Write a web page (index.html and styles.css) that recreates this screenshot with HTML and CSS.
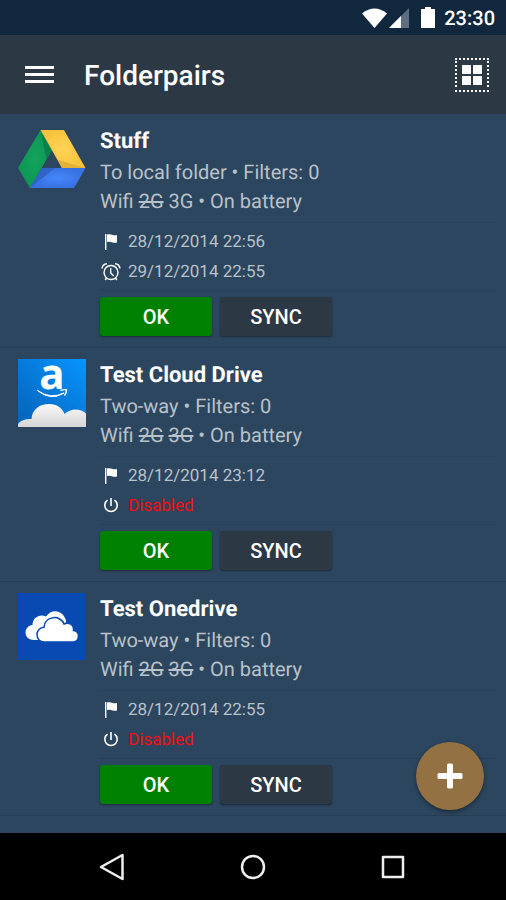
FILE: index.html
```html
<!DOCTYPE html>
<html lang="en">
<head>
<meta charset="utf-8">
<meta name="viewport" content="width=device-width, initial-scale=1">
<title>Folderpairs</title>
<link rel="stylesheet" href="styles.css">
</head>
<body>
<svg class="defs" width="0" height="0" aria-hidden="true">
  <symbol id="flag" viewBox="0 0 22 22"><path d="M5 3h1.400v16H5z" fill="#fff"/><path d="M7 3.500c2-.6 3.500-.4 5 .3 1.500.6 3 .7 5 .3v7.400c-2 .5-3.500.3-5-.3-1.500-.6-3-.7-5-.2z" fill="#fff"/></symbol>
  <symbol id="power" viewBox="0 0 22 22"><path d="M7.500 5.200a6.200 6.200 0 1 0 7 0M11 3v8" fill="none" stroke="#fff" stroke-width="1.600"/></symbol>
  <symbol id="alarm" viewBox="0 0 22 22"><g fill="none" stroke="#fff" stroke-width="1.400"><circle cx="11" cy="11.500" r="7"/><path d="M10.700 7v5l3 3M2 7.500C2.300 5 4.300 3 7 2.800M20 7.500c-.3-2.500-2.300-4.500-5-4.700M6.500 17l-1.300 2M15.500 17l1.300 2"/></g></symbol>
</svg>
<div class="screen">
  <div class="status">
    <svg width="56" height="24" viewBox="0 0 56 24" aria-hidden="true">
      <path d="M1 7.500Q13.500-2.500 26 7.500L13.500 22z" fill="#fff"/>
      <path d="M48 2v20H28z" fill="#5c6e7f"/><path d="M40 10v12H28z" fill="#fff"/>
    </svg>
    <svg class="battery" width="14" height="22" viewBox="0 0 14 22" aria-hidden="true"><path d="M4 0h6v2h4v19H0V2h4z" fill="#fff"/></svg>
    <time>23:30</time>
  </div>
  <header class="toolbar">
    <button class="icon-button" aria-label="Menu">
      <svg width="30" height="20" viewBox="0 0 30 20"><path d="M1 2.500h29M1 9.500h29M1 16.500h29" stroke="#fff" stroke-width="3"/></svg>
    </button>
    <h1>Folderpairs</h1>
    <button class="icon-button" aria-label="Select">
      <svg width="36" height="36" viewBox="0 0 36 36"><path d="M1 2h34M1 34h34M2 4v28M34 4v28" stroke="#fff" stroke-width="2" stroke-dasharray="2 2"/><path d="M8 8h9v9H8zM19 8h9v9h-9zM8 19h9v9H8zM19 19h9v9h-9z" fill="#fff"/></svg>
    </button>
  </header>
  <main>
    <ul class="pairs">
      <li class="pair">
        <svg class="logo" viewBox="0 0 68 68" role="img" aria-label="Google Drive">
          <defs>
            <radialGradient id="gr"><stop offset="0" stop-color="#13a45c"/><stop offset="1" stop-color="#0d9655"/></radialGradient>
            <radialGradient id="ye"><stop offset="0" stop-color="#ffd456"/><stop offset="1" stop-color="#f8c33c"/></radialGradient>
            <radialGradient id="bl"><stop offset="0" stop-color="#4587fb"/><stop offset="1" stop-color="#3871e2"/></radialGradient>
          </defs>
          <path d="M22.500 5L34 25 12 63 0 43z" fill="url(#gr)"/><path d="M22.500 5L34 25 28.500 34.500z" fill="#0b8048"/>
          <path d="M22.500 5H46l21.500 38H44z" fill="url(#ye)"/><path d="M40 35l27.500 8H44z" fill="#e4b139"/>
          <path d="M24 43h43.500L56 63H12z" fill="url(#bl)"/><path d="M24 43h13L12 63z" fill="#3164c9"/>
        </svg>
        <div class="details">
          <h2>Stuff</h2>
          <p>To local folder • Filters: 0</p>
          <p>Wifi <s>2G</s> 3G • On battery</p>
          <div class="times">
            <div class="time"><svg><use href="#flag"/></svg>28/12/2014 22:56</div>
            <div class="time"><svg><use href="#alarm"/></svg>29/12/2014 22:55</div>
          </div>
          <div class="actions"><button class="action ok">OK</button><button class="action">SYNC</button></div>
        </div>
      </li>
      <li class="pair">
        <svg class="logo" viewBox="0 0 68 68" role="img" aria-label="Amazon Cloud Drive">
          <defs>
            <linearGradient id="sky" x1="1" y1="0" x2="0" y2="1"><stop offset="0" stop-color="#0795ff"/><stop offset="1" stop-color="#0561b5"/></linearGradient>
            <linearGradient id="cloud" x2="0" y2="1"><stop offset="0" stop-color="#f8f8f8"/><stop offset="1" stop-color="#d6d6d6"/></linearGradient>
          </defs>
          <path d="M0 0h68v68H0z" fill="url(#sky)"/>
          <text class="amazon" x="34" y="30" text-anchor="middle">a</text>
          <path d="M19.500 31.500Q32 40.500 46 34 33 42.500 19.500 31.500z" fill="#fff" stroke="#fff"/>
          <path d="M42.500 31.500q3.500-1.200 6-.7.200 2.500-2 5.800" fill="none" stroke="#fff" stroke-width="1.400"/>
          <path d="M0 68v-3c2-3 6-5 13.500-5C14 51 21 45 31 45c8 0 13.500 4 15.500 10 6-6 16-6 21.500-.5V68z" fill="url(#cloud)"/>
        </svg>
        <div class="details">
          <h2>Test Cloud Drive</h2>
          <p>Two-way • Filters: 0</p>
          <p>Wifi <s>2G</s> <s>3G</s> • On battery</p>
          <div class="times">
            <div class="time"><svg><use href="#flag"/></svg>28/12/2014 23:12</div>
            <div class="time disabled"><svg><use href="#power"/></svg>Disabled</div>
          </div>
          <div class="actions"><button class="action ok">OK</button><button class="action">SYNC</button></div>
        </div>
      </li>
      <li class="pair">
        <svg class="logo" viewBox="0 0 68 68" role="img" aria-label="OneDrive">
          <path d="M0 0h68v67H0z" fill="#094ab2"/>
          <path d="M16 47c-5 0-8.500-3-8.500-7.500 0-4 3-7 7-7.500 0-8 8-11.500 13.500-8.500 6-9 18-6 20 4.500v19z" fill="#fff"/>
          <path d="M26 49c-4 0-7-3-7-7.500 0-4 3-7 7-7.300C27 22 43 22 46 31c5-2.500 10 1 9.500 6.500 7 1 6.500 11.500-1 11.500z" fill="#fff" stroke="#094ab2" stroke-width="1.500"/>
        </svg>
        <div class="details">
          <h2>Test Onedrive</h2>
          <p>Two-way • Filters: 0</p>
          <p>Wifi <s>2G</s> <s>3G</s> • On battery</p>
          <div class="times">
            <div class="time"><svg><use href="#flag"/></svg>28/12/2014 22:55</div>
            <div class="time disabled"><svg><use href="#power"/></svg>Disabled</div>
          </div>
          <div class="actions"><button class="action ok">OK</button><button class="action">SYNC</button></div>
        </div>
      </li>
    </ul>
    <button class="add" aria-label="Add folderpair"><svg width="26" height="26" viewBox="0 0 26 26"><path d="M10 2q0-1.500 1.500-1.500h3Q16 .5 16 2v8h8q1.500 0 1.500 1.500v3q0 1.500-1.500 1.500h-8v8q0 1.500-1.500 1.500h-3Q10 25.500 10 24v-8H2Q.5 16 .5 14.500v-3Q.5 10 2 10h8z" fill="#fff"/></svg></button>
  </main>
  <nav class="navbar">
    <button aria-label="Back"><svg width="28" height="28" viewBox="0 0 28 28"><path d="M23.500 2v24L2 14z"/></svg></button>
    <button aria-label="Home"><svg width="28" height="28" viewBox="0 0 28 28"><circle cx="14" cy="14" r="11"/></svg></button>
    <button aria-label="Recent apps"><svg width="28" height="28" viewBox="0 0 28 28"><path d="M4 4h20v20H4z"/></svg></button>
  </nav>
</div>
</body>
</html>
```
FILE: styles.css
```css
* { box-sizing: border-box; }
body, h1, h2, p, ul { margin: 0; padding: 0; }
body { background: #000; color: #fff; font-family: Roboto, "Liberation Sans", sans-serif; text-rendering: geometricPrecision; }
button { border: 0; padding: 0; background: none; color: inherit; font: inherit; cursor: pointer; }
svg { display: block; flex: none; }
.defs { position: absolute; }
.screen { display: flex; flex-direction: column; min-height: 100vh; background: #2c465f; }
.status { display: flex; align-items: center; justify-content: flex-end; height: 35px; padding-right: 11px; background: #10273e; font-size: 20px; font-weight: 500; }
.battery { margin: 0 9px 0 4px; }
.toolbar { display: flex; align-items: center; height: 79px; padding: 0 16px 0 24px; background: #2c3844; }
.toolbar h1 { flex: 1; margin-left: 30px; padding-top: 2px; font-size: 28px; font-weight: 500; line-height: 36px; }
main { position: relative; flex: 1; }
.pairs { list-style: none; }
.pair { display: flex; gap: 14px; padding: 11px 10px 11px 18px; border-bottom: 1px solid #263d54; }
.logo { width: 68px; height: 68px; overflow: visible; }
.amazon { fill: #fff; font: bold 42px "Open Sans", sans-serif; }
.details { flex: 1; padding-top: 1px; }
.details h2 { font-size: 22px; font-weight: 700; line-height: 32px; }
.details p { color: #b9c1c9; font-size: 20px; line-height: 29px; }
.times { margin-top: 6px; padding: 4px 0 3px; border: solid #283f56; border-width: 1px 0; border-top-color: #2a435b; }
.time { display: flex; align-items: center; gap: 6px; height: 30px; color: #b9c1c9; font-size: 17px; }
.time svg { width: 22px; height: 22px; }
.time.disabled { color: #fb0a10; }
.actions { display: flex; gap: 8px; margin-top: 6px; }
.action { width: 112px; height: 39px; border-radius: 3px; background: #2c3844; box-shadow: 0 1px 2px #0006; font-size: 20px; font-weight: 500; }
.ok { background: #008000; }
.add { position: absolute; right: 22px; bottom: 23px; display: grid; place-items: center; width: 68px; height: 68px; border-radius: 50%; background: #937142; box-shadow: 0 2px 4px #0006; }
.navbar { display: flex; justify-content: center; align-items: center; gap: 112px; height: 67px; background: #000; }
.navbar svg { fill: none; stroke: #eee; stroke-width: 2.5; stroke-linejoin: round; }
```
